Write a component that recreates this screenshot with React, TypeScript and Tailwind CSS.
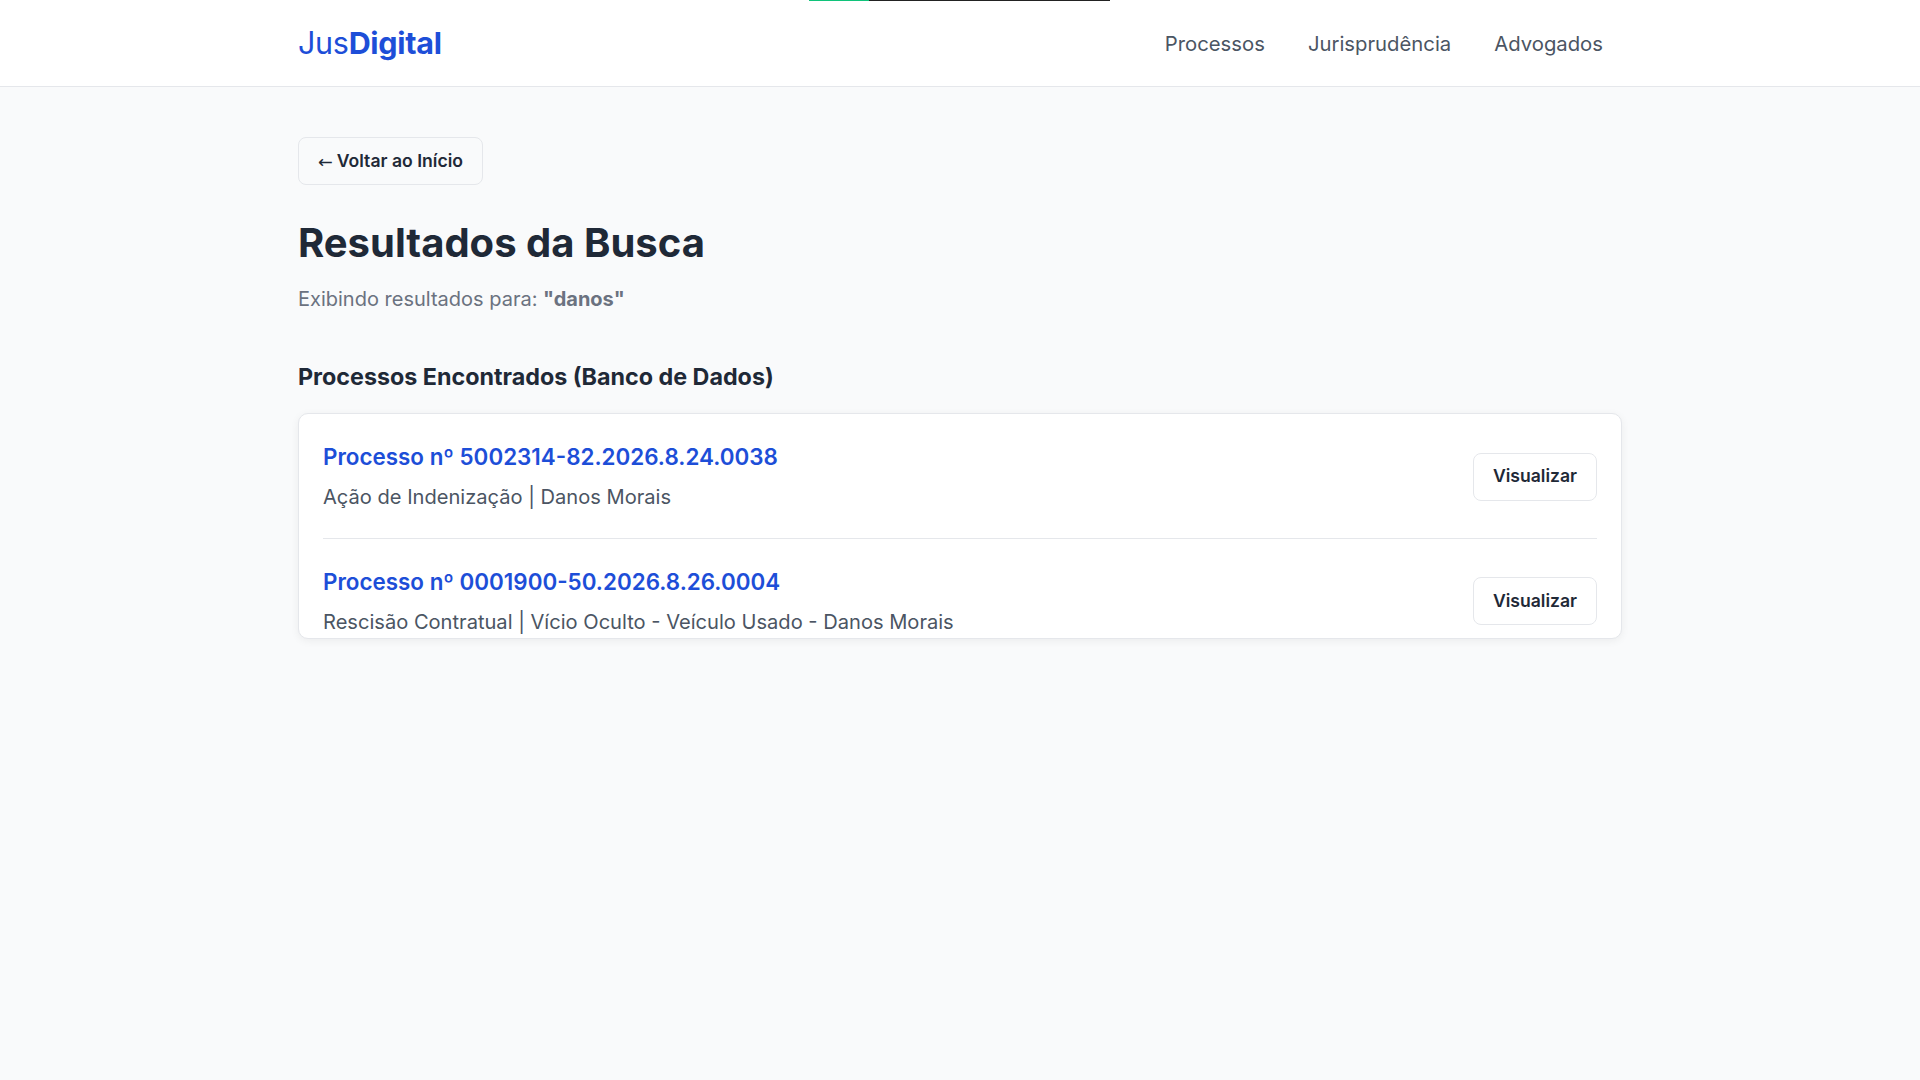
import React from "react";

const items = [
  {
    id: "5002314-82.2026.8.24.0038",
    desc: "Ação de Indenização | Danos Morais",
  },
  {
    id: "0001900-50.2026.8.26.0004",
    desc: "Rescisão Contratual | Vício Oculto - Veículo Usado - Danos Morais",
  },
];

export default function App() {
  return (
    <div
      className="relative min-h-[1080px] w-full bg-[#f9fafb] text-[#1f2937]"
      style={{ fontFamily: "Inter, 'Noto Sans', 'Liberation Sans', sans-serif" }}
    >
      {/* top progress indicator */}
      <div className="absolute left-[809px] top-0 z-10 flex h-[1px]">
        <div className="h-full w-[60px] bg-[#10c37a]" />
        <div className="h-full w-[241px] bg-[#222222]" />
      </div>

      <header className="h-[87px] border-b border-[#e5e7eb] bg-white">
        <div className="mx-auto flex h-full w-[1324px] items-center justify-between">
          <a className="pt-[1px] text-[30.5px] leading-none tracking-[-0.01em] text-[#1d4ed8]">
            <span className="font-normal">Jus</span>
            <span className="font-bold">Digital</span>
          </a>
          <nav className="flex items-center gap-[43px] pr-[19px] pt-[2px] text-[20.3px] font-normal text-[#4b5563]">
            <a>Processos</a>
            <a>Jurisprudência</a>
            <a>Advogados</a>
          </nav>
        </div>
      </header>

      <main className="mx-auto w-[1324px] pt-[50px]">
        <button className="flex h-[48px] items-center rounded-lg border border-[#e5e7eb] bg-[#f9fafb] px-[19px] text-[17.6px] font-semibold text-[#1f2937]">
          <span
            className="mr-[4px] font-normal"
            style={{ fontFamily: "'Noto Sans', 'DejaVu Sans', sans-serif" }}
          >
            ←
          </span>
          Voltar ao Início
        </button>

        <h1 className="mt-[34px] text-[40px] font-bold leading-[48px] text-[#1f2937]">
          Resultados da Busca
        </h1>
        <p className="mt-[18px] text-[20px] leading-[28px] text-[#6b7280]">
          Exibindo resultados para: <strong className="font-bold">"danos"</strong>
        </p>

        <h2 className="mt-[49px] text-[23.3px] font-bold leading-[30px] text-[#1f2937]">
          Processos Encontrados (Banco de Dados)
        </h2>

        <div className="mt-[21px] h-[226px] overflow-hidden rounded-[10px] border border-[#e5e7eb] bg-white px-6 pt-[1px] shadow-[0_2px_8px_rgba(0,0,0,0.06)]">
          {items.map((it, i) => (
            <div
              key={it.id}
              className={
                i < items.length - 1
                  ? "flex h-[124px] items-center justify-between border-b border-[#e5e7eb]"
                  : "flex h-[124px] items-center justify-between"
              }
            >
              <div className="flex flex-col">
                <a className="text-[22.4px] font-semibold leading-[30px] text-[#1d4ed8]">
                  Processo nº {it.id}
                </a>
                <span className="mt-[11px] text-[20.1px] leading-[28px] text-[#4b5563]">
                  {it.desc}
                </span>
              </div>
              <button className="flex h-[48px] w-[124px] items-center justify-center rounded-lg border border-[#e5e7eb] bg-white text-[17.6px] font-semibold text-[#1f2937]">
                Visualizar
              </button>
            </div>
          ))}
        </div>
      </main>
    </div>
  );
}
